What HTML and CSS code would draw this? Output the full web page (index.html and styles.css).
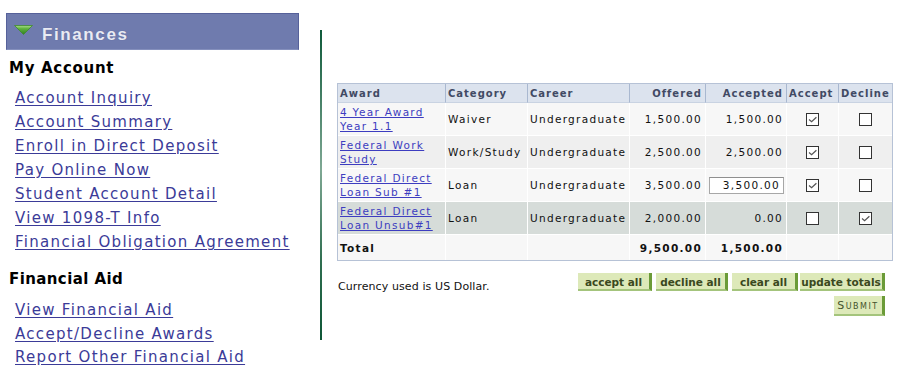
FILE: index.html
```html
<!DOCTYPE html>
<html>
<head>
<meta charset="utf-8">
<link rel="stylesheet" href="styles.css">
</head>
<body>
<div class="page">
  <div class="sidebar">
    <div class="bar">
      <svg class="tri" width="19" height="10" viewBox="0 0 19 10">
        <defs>
          <linearGradient id="g" x1="0" y1="0" x2="0" y2="1">
            <stop offset="0" stop-color="#a9dd8a"/>
            <stop offset="0.35" stop-color="#5fb23e"/>
            <stop offset="1" stop-color="#2f7f22"/>
          </linearGradient>
        </defs>
        <polygon points="0.5,0.5 18.5,0.5 9.5,9.5" fill="url(#g)" stroke="#3f8a2c" stroke-width="0.8"/>
      </svg>
      <span class="bar-title">Finances</span>
    </div>
    <div class="section-title first">My Account</div>
    <a class="nav" href="#">Account Inquiry</a>
    <a class="nav" href="#">Account Summary</a>
    <a class="nav" href="#">Enroll in Direct Deposit</a>
    <a class="nav" href="#">Pay Online Now</a>
    <a class="nav" href="#">Student Account Detail</a>
    <a class="nav" href="#">View 1098-T Info</a>
    <a class="nav" href="#">Financial Obligation Agreement</a>
    <div class="section-title second">Financial Aid</div>
    <a class="nav fa" href="#">View Financial Aid</a>
    <a class="nav fa" href="#">Accept/Decline Awards</a>
    <a class="nav fa" href="#">Report Other Financial Aid</a>
  </div>
  <div class="divider"></div>
  <div class="main">
    <table class="awards">
      <colgroup>
        <col class="c-award"><col class="c-cat"><col class="c-career"><col class="c-off"><col class="c-acc"><col class="c-accept"><col class="c-decline">
      </colgroup>
      <thead>
        <tr>
          <th>Award</th><th>Category</th><th>Career</th><th class="num">Offered</th><th class="num">Accepted</th><th>Accept</th><th>Decline</th>
        </tr>
      </thead>
      <tbody>
        <tr class="r-light">
          <td><a href="#">4 Year Award<br>Year 1.1</a></td><td>Waiver</td><td>Undergraduate</td><td class="num">1,500.00</td><td class="num">1,500.00</td>
          <td class="cb"><span class="box checked"><svg viewBox="0 0 11 11"><path d="M2 5.5 L4.6 7.8 L9.4 3.2" fill="none" stroke="#555" stroke-width="1.2"/></svg></span></td>
          <td class="cb"><span class="box"></span></td>
        </tr>
        <tr class="r-mid">
          <td><a href="#">Federal Work<br>Study</a></td><td>Work/Study</td><td>Undergraduate</td><td class="num">2,500.00</td><td class="num">2,500.00</td>
          <td class="cb"><span class="box checked"><svg viewBox="0 0 11 11"><path d="M2 5.5 L4.6 7.8 L9.4 3.2" fill="none" stroke="#555" stroke-width="1.2"/></svg></span></td>
          <td class="cb"><span class="box"></span></td>
        </tr>
        <tr class="r-light">
          <td><a href="#">Federal Direct<br>Loan Sub #1</a></td><td>Loan</td><td>Undergraduate</td><td class="num">3,500.00</td><td class="num inp"><span class="field">3,500.00</span></td>
          <td class="cb"><span class="box checked"><svg viewBox="0 0 11 11"><path d="M2 5.5 L4.6 7.8 L9.4 3.2" fill="none" stroke="#555" stroke-width="1.2"/></svg></span></td>
          <td class="cb"><span class="box"></span></td>
        </tr>
        <tr class="r-dark">
          <td><a href="#">Federal Direct<br>Loan Unsub#1</a></td><td>Loan</td><td>Undergraduate</td><td class="num">2,000.00</td><td class="num">0.00</td>
          <td class="cb"><span class="box"></span></td>
          <td class="cb"><span class="box checked"><svg viewBox="0 0 11 11"><path d="M2 5.5 L4.6 7.8 L9.4 3.2" fill="none" stroke="#555" stroke-width="1.2"/></svg></span></td>
        </tr>
        <tr class="r-total">
          <td class="b">Total</td><td></td><td></td><td class="num b">9,500.00</td><td class="num b">1,500.00</td><td></td><td></td>
        </tr>
      </tbody>
    </table>
    <div class="actions">
      <div class="currency">Currency used is US Dollar.</div>
      <div class="btns">
        <div class="btn-row">
          <span class="btn w-accept">accept all</span>
          <span class="btn w-decline">decline all</span>
          <span class="btn w-clear">clear all</span>
          <span class="btn w-update">update totals</span>
        </div>
        <div class="btn-row2">
          <span class="btn submit">Submit</span>
        </div>
      </div>
    </div>
  </div>
</div>
</body>
</html>
```
FILE: styles.css
```css
html, body {
  margin: 0;
  padding: 0;
  background: #ffffff;
}
.page {
  display: flex;
  align-items: flex-start;
  width: 905px;
  height: 380px;
  overflow: hidden;
  font-family: "DejaVu Sans", Verdana, sans-serif;
}
.sidebar {
  width: 320px;
  flex: none;
  padding-top: 13px;
  display: flex;
  flex-direction: column;
  align-items: flex-start;
}
.bar {
  margin-left: 6px;
  width: 291px;
  height: 35px;
  background: #6f7bae;
  border: 1px solid #56619a;
  border-bottom-color: #8590bd;
  display: flex;
  align-items: center;
}
.tri {
  margin-left: 7px;
  margin-top: -4px;
  flex: none;
}
.bar-title {
  margin-left: 9px;
  margin-top: 6px;
  font-family: "Liberation Sans", Arial, sans-serif;
  font-weight: bold;
  font-size: 17px;
  letter-spacing: 1.6px;
  color: #e9ebf3;
  text-shadow: 0 0 1px #5a6598;
}
.section-title {
  margin-left: 9px;
  font-weight: bold;
  font-size: 15px;
  line-height: 24px;
  color: #000;
}
.section-title.first {
  margin-top: 6px;
  margin-bottom: 6px;
  letter-spacing: 0.7px;
}
.section-title.second {
  margin-top: 13px;
  margin-bottom: 8px;
  letter-spacing: 0.4px;
}
.nav {
  display: block;
  margin-left: 15px;
  font-size: 15px;
  line-height: 24px;
  letter-spacing: 1.3px;
  color: #3b3b98;
  text-decoration: underline;
  text-underline-offset: 2px;
}
.nav.fa {
  line-height: 23.7px;
}
.divider {
  flex: none;
  width: 2px;
  height: 310px;
  margin-top: 30px;
  background: linear-gradient(#0f5a3a, #7fa894 45%, #2f6e50 75%, #0e5636);
}
.main {
  flex: none;
  width: 556px;
  padding-left: 15px;
  padding-top: 83px;
}
.awards {
  width: 556px;
  border-collapse: separate;
  border-spacing: 0;
  border: 1px solid #b6c2d6;
  table-layout: fixed;
  font-size: 10.5px;
  letter-spacing: 1.3px;
  color: #111;
}
.c-award { width: 108px; }
.c-cat { width: 82px; }
.c-career { width: 102px; }
.c-off { width: 76px; }
.c-acc { width: 81px; }
.c-accept { width: 52px; }
.c-decline { width: 53px; }
.awards th {
  height: 18px;
  padding: 0 2px;
  background: #dce3ee;
  border-right: 1px solid #a9b8d0;
  border-bottom: 1px solid #c9d3e2;
  text-align: left;
  font-size: 10px;
  font-weight: bold;
  letter-spacing: 1px;
  color: #414a64;
  white-space: nowrap;
  overflow: hidden;
}
.awards th:last-child {
  border-right: none;
}
.awards td {
  height: 32px;
  padding: 0 2px;
  border-right: 1px solid #ffffff;
  border-bottom: 1px solid #ffffff;
  line-height: 14px;
  white-space: nowrap;
  overflow: hidden;
  vertical-align: middle;
}
.awards td:last-child {
  border-right: none;
}
.awards .r-total td {
  height: 25px;
  border-bottom: none;
}
.awards .num {
  text-align: right;
  padding-right: 3px;
}
.awards th.num {
  padding-right: 3px;
}
.awards .b {
  font-weight: bold;
}
.r-light td { background: #f7f7f7; }
.r-mid td { background: #efefef; }
.r-dark td { background: #d6dcd9; }
.r-total td { background: #f7f7f7; }
.awards a {
  color: #3d3dc0;
  text-decoration: underline;
}
.awards td.cb {
  text-align: center;
  padding: 0;
}
.box {
  display: inline-block;
  width: 11px;
  height: 11px;
  border: 1px solid #333;
  background: #fff;
  vertical-align: middle;
}
.box svg {
  display: block;
  width: 11px;
  height: 11px;
}
.awards td.inp {
  padding-right: 2px;
}
.field {
  display: inline-block;
  box-sizing: border-box;
  width: 75px;
  height: 17px;
  line-height: 15px;
  border: 1px solid #a7a7a7;
  border-top-color: #8f8f8f;
  background: #fff;
  padding-right: 3px;
  text-align: right;
}
.actions {
  display: flex;
  justify-content: space-between;
  align-items: flex-start;
  margin-top: 12px;
  padding-right: 8px;
}
.currency {
  margin-left: 1px;
  margin-top: 7px;
  font-size: 11px;
  letter-spacing: 0.1px;
  color: #111;
}
.btns {
  display: flex;
  flex-direction: column;
  align-items: flex-end;
}
.btn-row {
  display: flex;
  gap: 4px;
}
.btn-row2 {
  margin-top: 5px;
  display: flex;
}
.btn {
  box-sizing: border-box;
  height: 18px;
  display: flex;
  align-items: center;
  justify-content: center;
  background: #dde9b9;
  border-right: 3px solid #6b9b38;
  border-bottom: 2px solid #a4c47c;
  font-size: 10.5px;
  font-weight: bold;
  color: #3a4820;
  padding-top: 1px;
}
.w-accept { width: 74px; }
.w-decline { width: 72px; }
.w-clear { width: 66px; margin-right: -2px; }
.w-update { width: 85px; }
.submit {
  width: 51px;
  height: 20px;
  font-variant: small-caps;
  font-weight: normal;
  letter-spacing: 1.5px;
  font-size: 11px;
  color: #44542c;
}
```
